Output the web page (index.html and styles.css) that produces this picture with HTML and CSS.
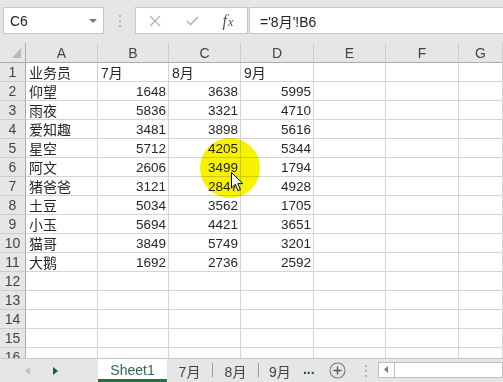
FILE: index.html
```html
<!DOCTYPE html>
<html lang="zh-CN">
<head>
<meta charset="utf-8">
<link rel="stylesheet" href="styles.css">
</head>
<body>
<div class="toolbar">
  <div class="namebox"><span>C6</span><span class="dd"></span></div>
  <div class="vsep"><i></i><i></i><i></i></div>
  <div class="fxbox">
    <span class="ic ic-x"><svg width="12" height="12" viewBox="0 0 12 12"><path d="M1 1L11 11M11 1L1 11" stroke="#b3b3b3" stroke-width="1.3" fill="none"/></svg></span>
    <span class="ic ic-ok"><svg width="13" height="10" viewBox="0 0 13 10"><path d="M1 5L4.5 8.5L12 1" stroke="#b3b3b3" stroke-width="1.6" fill="none"/></svg></span>
    <span class="ic ic-fx"><i>f</i><i class="x">x</i></span>
  </div>
  <div class="formula">='8月'!B6</div>
</div>

<div class="grid">
  <div class="corner"><span class="tri"></span></div>
  <div class="h">A</div><div class="h">B</div><div class="h">C</div><div class="h">D</div><div class="h">E</div><div class="h">F</div><div class="h">G</div>

  <div class="r">1</div><div class="c t">业务员</div><div class="c t">7月</div><div class="c t">8月</div><div class="c t">9月</div><div class="c"></div><div class="c"></div><div class="c"></div>
  <div class="r">2</div><div class="c t">仰望</div><div class="c n">1648</div><div class="c n">3638</div><div class="c n">5995</div><div class="c"></div><div class="c"></div><div class="c"></div>
  <div class="r">3</div><div class="c t">雨夜</div><div class="c n">5836</div><div class="c n">3321</div><div class="c n">4710</div><div class="c"></div><div class="c"></div><div class="c"></div>
  <div class="r">4</div><div class="c t">爱知趣</div><div class="c n">3481</div><div class="c n">3898</div><div class="c n">5616</div><div class="c"></div><div class="c"></div><div class="c"></div>
  <div class="r">5</div><div class="c t">星空</div><div class="c n">5712</div><div class="c n">4205</div><div class="c n">5344</div><div class="c"></div><div class="c"></div><div class="c"></div>
  <div class="r">6</div><div class="c t">阿文</div><div class="c n">2606</div><div class="c n">3499</div><div class="c n">1794</div><div class="c"></div><div class="c"></div><div class="c"></div>
  <div class="r">7</div><div class="c t">猪爸爸</div><div class="c n">3121</div><div class="c n">2847</div><div class="c n">4928</div><div class="c"></div><div class="c"></div><div class="c"></div>
  <div class="r">8</div><div class="c t">土豆</div><div class="c n">5034</div><div class="c n">3562</div><div class="c n">1705</div><div class="c"></div><div class="c"></div><div class="c"></div>
  <div class="r">9</div><div class="c t">小玉</div><div class="c n">5694</div><div class="c n">4421</div><div class="c n">3651</div><div class="c"></div><div class="c"></div><div class="c"></div>
  <div class="r">10</div><div class="c t">猫哥</div><div class="c n">3849</div><div class="c n">5749</div><div class="c n">3201</div><div class="c"></div><div class="c"></div><div class="c"></div>
  <div class="r">11</div><div class="c t">大鹅</div><div class="c n">1692</div><div class="c n">2736</div><div class="c n">2592</div><div class="c"></div><div class="c"></div><div class="c"></div>
  <div class="r">12</div><div class="c"></div><div class="c"></div><div class="c"></div><div class="c"></div><div class="c"></div><div class="c"></div><div class="c"></div>
  <div class="r">13</div><div class="c"></div><div class="c"></div><div class="c"></div><div class="c"></div><div class="c"></div><div class="c"></div><div class="c"></div>
  <div class="r">14</div><div class="c"></div><div class="c"></div><div class="c"></div><div class="c"></div><div class="c"></div><div class="c"></div><div class="c"></div>
  <div class="r">15</div><div class="c"></div><div class="c"></div><div class="c"></div><div class="c"></div><div class="c"></div><div class="c"></div><div class="c"></div>
  <div class="r">16</div><div class="c"></div><div class="c"></div><div class="c"></div><div class="c"></div><div class="c"></div><div class="c"></div><div class="c"></div>
</div>

<div class="tabbar">
  <div class="tabnav">
    <svg class="arr" width="5" height="8" viewBox="0 0 5 8"><path d="M5 0L0 4L5 8Z" fill="#c2c2c2"/></svg>
    <svg class="arr" width="5" height="8" viewBox="0 0 5 8"><path d="M0 0L5 4L0 8Z" fill="#1f5a36"/></svg>
  </div>
  <div class="tab active">Sheet1</div>
  <div class="tab">7月</div>
  <div class="tsep"></div>
  <div class="tab">8月</div>
  <div class="tsep"></div>
  <div class="tab last">9月</div>
  <div class="more">...</div>
  <div class="add"><svg width="17" height="17" viewBox="0 0 17 17"><circle cx="8.5" cy="8.5" r="7.5" fill="none" stroke="#7a7a7a" stroke-width="1.1"/><path d="M8.5 4.5V12.5M4.5 8.5H12.5" stroke="#555" stroke-width="1.4"/></svg></div>
  <div class="vsep small"><i></i><i></i><i></i></div>
  <div class="hscroll">
    <div class="sbtn"><svg width="4" height="7" viewBox="0 0 4 7"><path d="M4 0L0 3.5L4 7Z" fill="#7a7a7a"/></svg></div>
    <div class="track"></div>
  </div>
</div>

<div class="spot"></div>
<svg class="cursor" width="13" height="20" viewBox="0 0 13 20"><path d="M0.5 0.5L0.5 16L4.3 12.4L7 18.6L9.4 17.6L6.8 11.6L11.8 11.6Z" fill="#fff" stroke="#000" stroke-width="1"/></svg>
</body>
</html>
```
FILE: styles.css
```css
* { box-sizing: border-box; margin: 0; padding: 0; }
body {
  width: 503px;
  height: 382px;
  overflow: hidden;
  position: relative;
  background: #e6e6e6;
  font-family: "Liberation Sans", "Noto Sans CJK SC", sans-serif;
  color: #262626;
}

/* ---------- formula toolbar ---------- */
.toolbar {
  height: 43px;
  display: flex;
  align-items: flex-start;
  padding: 7px 0 0 3px;
}
.namebox {
  width: 101px;
  height: 27px;
  background: #fff;
  border: 1px solid #c6c6c6;
  display: flex;
  align-items: center;
  justify-content: space-between;
  padding: 0 6px 0 6px;
  font-size: 14px;
  color: #222;
}
.dd {
  width: 0; height: 0;
  border-left: 4px solid transparent;
  border-right: 4px solid transparent;
  border-top: 4px solid #7a7a7a;
}
.vsep {
  width: 31px;
  height: 27px;
  display: flex;
  flex-direction: column;
  align-items: center;
  justify-content: center;
  gap: 3px;
}
.vsep i {
  width: 2px; height: 2px;
  background: #b0b0b0;
  display: block;
}
.fxbox {
  width: 113px;
  height: 27px;
  background: #fff;
  border: 1px solid #c6c6c6;
  display: flex;
  align-items: center;
}
.ic { display: flex; align-items: center; justify-content: center; height: 100%; }
.ic-x { width: 37px; }
.ic-ok { width: 38px; }
.ic-fx { width: 34px; font-family: "Liberation Serif", serif; font-size: 16px; color: #505050; }
.ic-fx i { font-style: italic; }
.ic-fx .x { font-size: 12px; position: relative; top: 2px; margin-left: 1px; }
.formula {
  flex: 1;
  margin-left: 1px;
  margin-right: -4px;
  height: 27px;
  background: #fff;
  border: 1px solid #c6c6c6;
  padding-left: 10px;
  display: flex;
  align-items: center;
  font-size: 14px;
  color: #222;
}

/* ---------- sheet grid ---------- */
.grid {
  height: 315px;
  overflow: hidden;
  display: grid;
  grid-template-columns: 26px 72px 71px 72px 73px 72px 73px 44px;
  grid-template-rows: 20px;
  grid-auto-rows: 19px;
  background: #fff;
}
.corner {
  background: #e6e6e6;
  border-right: 1px solid #ababab;
  border-bottom: 1px solid #ababab;
  position: relative;
}
.tri {
  position: absolute;
  right: 4px;
  bottom: 4px;
  width: 0; height: 0;
  border-left: 9px solid transparent;
  border-bottom: 10px solid #b9b9b9;
}
.h {
  background: #e6e6e6;
  border-right: 1px solid #cdcdcd;
  border-bottom: 1px solid #ababab;
  display: flex;
  align-items: center;
  justify-content: center;
  font-size: 14px;
  color: #444;
  padding-top: 1px;
}
.r {
  background: #e6e6e6;
  border-right: 1px solid #ababab;
  border-bottom: 1px solid #cdcdcd;
  display: flex;
  align-items: center;
  justify-content: center;
  font-size: 14px;
  color: #444;
}
.c {
  border-right: 1px solid #d4d4d4;
  border-bottom: 1px solid #d4d4d4;
  display: flex;
  align-items: center;
  white-space: nowrap;
  overflow: hidden;
}
.t { padding-left: 3px; font-size: 14px; }
.n { justify-content: flex-end; padding-right: 2px; font-size: 13.5px; }

/* ---------- sheet tabs ---------- */
.tabbar {
  height: 24px;
  border-top: 1px solid #c6c6c6;
  display: flex;
  align-items: stretch;
  font-size: 14px;
}
.tabnav {
  width: 98px;
  display: flex;
  align-items: center;
  padding-left: 25px;
  gap: 23px;
}
.tab {
  width: 45px;
  display: flex;
  align-items: center;
  justify-content: center;
  color: #444;
}
.tab.active {
  width: 69px;
  background: #fff;
  color: #2f6b48;
  border-bottom: 3px solid #217346;
  padding-top: 2px;
}
.tsep {
  width: 1px;
  margin: 4px 0 5px;
  background: #9a9a9a;
}
.tab.last { width: auto; padding-left: 10px; }
.more {
  width: 30px;
  display: flex;
  align-items: center;
  justify-content: center;
  color: #1f5a36;
  font-weight: bold;
  padding-bottom: 4px;
  padding-left: 6px;
}
.add {
  width: 33px;
  display: flex;
  align-items: center;
  justify-content: center;
  padding-bottom: 1px;
}
.vsep.small { width: 24px; height: auto; }
.hscroll {
  flex: 1;
  display: flex;
  align-items: center;
  padding-bottom: 2px;
}
.sbtn {
  width: 16px;
  height: 16px;
  background: #fff;
  border: 1px solid #bdbdbd;
  border-right: none;
  display: flex;
  align-items: center;
  justify-content: center;
}
.track {
  flex: 1;
  height: 16px;
  background: #fff;
  border: 1px solid #bdbdbd;
}

/* ---------- screen-recording overlay ---------- */
.spot {
  position: absolute;
  left: 200px;
  top: 138px;
  width: 60px;
  height: 60px;
  border-radius: 50%;
  background: #f7f300;
  mix-blend-mode: multiply;
}
.cursor {
  position: absolute;
  left: 231px;
  top: 172px;
}
```
